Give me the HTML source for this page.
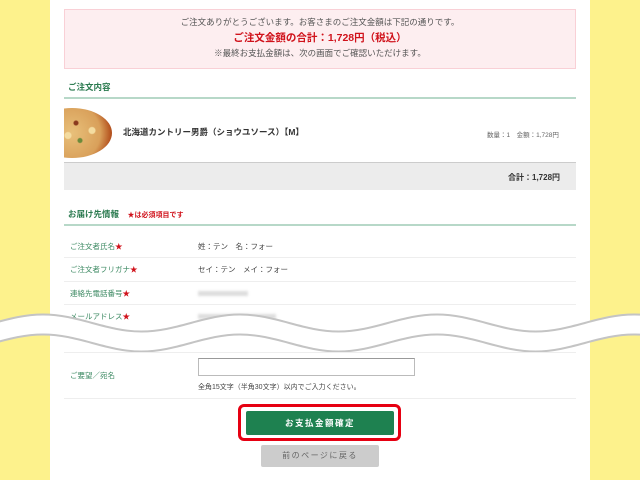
<!DOCTYPE html>
<html><head><meta charset="utf-8"><style>
*{margin:0;padding:0;box-sizing:border-box}
body{width:640px;height:480px;overflow:hidden;background:#fdf28c;font-family:"Liberation Sans","Noto Sans CJK JP",sans-serif;color:#333;position:relative}
.col{position:absolute;left:50px;top:0;width:540px;height:480px;background:#fff}
.a{position:absolute}
.pink{left:64px;top:9px;width:512px;height:60px;background:#fdeef0;border:1px solid #f9d0d6;text-align:center;font-size:8.5px;color:#555}
.h{font-size:8.5px;font-weight:bold;color:#2a7a4f}
.line{height:2px;background:#b7d8c8;left:64px;width:512px}
.sep{height:1px;background:#eee;left:64px;width:512px}
.lab{left:70px;font-size:7.5px;color:#3d8a63}
.lab b{color:#d0121b}
.val{left:198px;font-size:7.5px;color:#444}
.blur{left:198px;height:5px;background:#ddd;filter:blur(1.2px)}
</style></head><body>
<div class="col"></div>
<div class="a pink">
<div style="margin-top:6px">ご注文ありがとうございます。お客さまのご注文金額は下記の通りです。</div>
<div style="color:#d0121b;font-weight:bold;font-size:10.5px;margin-top:2px">ご注文金額の合計：1,728円（税込）</div>
<div style="margin-top:2px">※最終お支払金額は、次の画面でご確認いただけます。</div>
</div>
<div class="a h" style="left:68px;top:81px">ご注文内容</div>
<div class="a line" style="top:97px"></div>
<div class="a" style="left:64px;top:108px;width:48px;height:50px;overflow:hidden"><div style="width:80px;height:50px;margin-left:-32px;border-radius:50%;background:radial-gradient(circle at 30% 40%,#6b8a3a 0 2px,transparent 3px),radial-gradient(circle at 55% 30%,#8a3a1e 0 2px,transparent 3px),radial-gradient(circle at 60% 65%,#6b8a3a 0 2px,transparent 3px),radial-gradient(circle at 75% 45%,#f4dca0 0 3px,transparent 4px),radial-gradient(circle at 45% 55%,#f4dca0 0 3px,transparent 4px),radial-gradient(circle,#e8c07a 0%,#d9a05a 60%,#b5531f 82%,#a0401a 100%)"></div></div>
<div class="a" style="left:123px;top:126px;font-size:8.5px;font-weight:bold;color:#333">北海道カントリー男爵（ショウユソース）【M】</div>
<div class="a" style="left:487px;top:129px;font-size:6.5px;color:#666">数量：1　金額：1,728円</div>
<div class="a" style="left:64px;top:162px;width:512px;height:28px;background:#ececec;border-top:1px solid #ccc"></div>
<div class="a" style="left:508px;top:172px;font-size:8px;font-weight:bold;color:#333">合計：1,728円</div>
<div class="a h" style="left:68px;top:208px">お届け先情報　<span style="color:#d0121b;font-size:7px">★は必須項目です</span></div>
<div class="a line" style="top:224px"></div>
<div class="a lab" style="top:241px">ご注文者氏名<b>★</b></div><div class="a val" style="top:241px">姓：テン　名：フォー</div>
<div class="a sep" style="top:257px"></div>
<div class="a lab" style="top:264px">ご注文者フリガナ<b>★</b></div><div class="a val" style="top:264px">セイ：テン　メイ：フォー</div>
<div class="a sep" style="top:281px"></div>
<div class="a lab" style="top:288px">連絡先電話番号<b>★</b></div><div class="a blur" style="top:291px;width:50px"></div>
<div class="a sep" style="top:304px"></div>
<div class="a lab" style="top:311px">メールアドレス<b>★</b></div><div class="a blur" style="top:314px;width:78px"></div>
<svg class="a" style="left:0;top:0" width="640" height="480">
<defs><path id="w" d="M-154 314.5 C-118.5 314.5 -91 331.5 -55.5 331.5 C-20 331.5 7.5 314.5 43 314.5 C78.5 314.5 106 331.5 141.5 331.5 C177 331.5 204.5 314.5 240 314.5 C275.5 314.5 303 331.5 338.5 331.5 C374 331.5 401.5 314.5 437 314.5 C472.5 314.5 500 331.5 535.5 331.5 C571 331.5 598.5 314.5 634 314.5 C669.5 314.5 697 331.5 732.5 331.5"/></defs>
<use href="#w" transform="translate(0,10)" fill="none" stroke="#fff" stroke-width="20"/>
<g fill="none" stroke="#c4c4c4" stroke-width="2">
<use href="#w"/>
<use href="#w" transform="translate(0,20)"/>
</g></svg>
<div class="a sep" style="top:352px"></div>
<div class="a lab" style="top:370px">ご要望／宛名</div>
<div class="a" style="left:198px;top:358px;width:217px;height:18px;border:1px solid #bbb;border-top-color:#999"></div>
<div class="a val" style="top:382px;font-size:7px">全角15文字（半角30文字）以内でご入力ください。</div>
<div class="a sep" style="top:398px"></div>
<div class="a" style="left:238px;top:404px;width:163px;height:37px;border:3px solid #e60012;border-radius:6px;background:#fff"></div>
<div class="a" style="left:246px;top:411px;width:148px;height:24px;background:#1e8150;border-radius:2px;color:#fff;font-size:8.5px;font-weight:bold;text-align:center;line-height:24px;letter-spacing:1.5px">お支払金額確定</div>
<div class="a" style="left:261px;top:445px;width:118px;height:22px;background:#ccc;border-radius:2px;color:#666;font-size:8px;text-align:center;line-height:22px;letter-spacing:1.5px">前のページに戻る</div>
</body></html>
